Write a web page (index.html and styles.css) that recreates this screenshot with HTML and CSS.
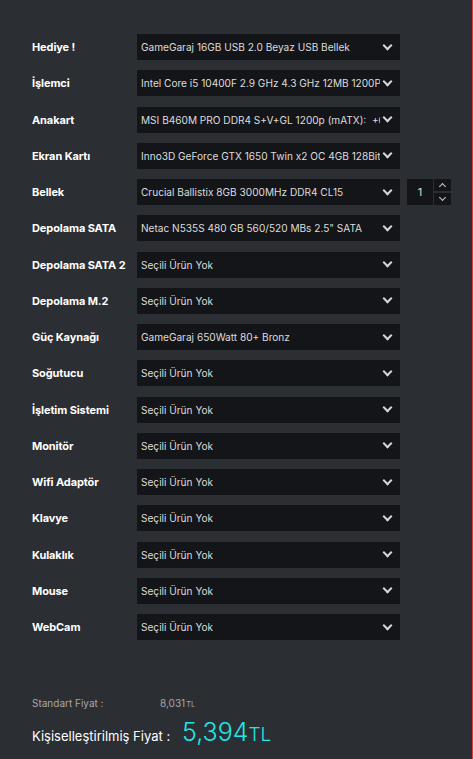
FILE: index.html
```html
<!DOCTYPE html>
<html lang="tr">
<head>
<meta charset="utf-8">
<link rel="stylesheet" href="styles.css">
</head>
<body>
<div class="page">
  <div class="rows">
    <div class="row"><div class="label">Hediye !</div><div class="select"><span class="val">GameGaraj 16GB USB 2.0 Beyaz USB Bellek</span><span class="chev"></span></div></div>
    <div class="row"><div class="label">İşlemci</div><div class="select"><span class="val">Intel Core i5 10400F 2.9 GHz 4.3 GHz 12MB 1200P: +0</span><span class="chev"></span></div></div>
    <div class="row"><div class="label">Anakart</div><div class="select"><span class="val">MSI B460M PRO DDR4 S+V+GL 1200p (mATX):  +69</span><span class="chev"></span></div></div>
    <div class="row"><div class="label">Ekran Kartı</div><div class="select"><span class="val">Inno3D GeForce GTX 1650 Twin x2 OC 4GB 128Bit: +0</span><span class="chev"></span></div></div>
    <div class="row"><div class="label">Bellek</div><div class="select"><span class="val">Crucial Ballistix 8GB 3000MHz DDR4 CL15</span><span class="chev"></span></div>
      <div class="qty">1</div>
      <div class="spin"><span class="sbtn up"></span><span class="sbtn down"></span></div>
    </div>
    <div class="row"><div class="label">Depolama SATA</div><div class="select"><span class="val">Netac N535S 480 GB 560/520 MBs 2.5" SATA</span><span class="chev"></span></div></div>
    <div class="row"><div class="label">Depolama SATA 2</div><div class="select"><span class="val">Seçili Ürün Yok</span><span class="chev"></span></div></div>
    <div class="row"><div class="label">Depolama M.2</div><div class="select"><span class="val">Seçili Ürün Yok</span><span class="chev"></span></div></div>
    <div class="row"><div class="label">Güç Kaynağı</div><div class="select"><span class="val">GameGaraj 650Watt 80+ Bronz</span><span class="chev"></span></div></div>
    <div class="row"><div class="label">Soğutucu</div><div class="select"><span class="val">Seçili Ürün Yok</span><span class="chev"></span></div></div>
    <div class="row"><div class="label">İşletim Sistemi</div><div class="select"><span class="val">Seçili Ürün Yok</span><span class="chev"></span></div></div>
    <div class="row"><div class="label">Monitör</div><div class="select"><span class="val">Seçili Ürün Yok</span><span class="chev"></span></div></div>
    <div class="row"><div class="label">Wifi Adaptör</div><div class="select"><span class="val">Seçili Ürün Yok</span><span class="chev"></span></div></div>
    <div class="row"><div class="label">Klavye</div><div class="select"><span class="val">Seçili Ürün Yok</span><span class="chev"></span></div></div>
    <div class="row"><div class="label">Kulaklık</div><div class="select"><span class="val">Seçili Ürün Yok</span><span class="chev"></span></div></div>
    <div class="row"><div class="label">Mouse</div><div class="select"><span class="val">Seçili Ürün Yok</span><span class="chev"></span></div></div>
    <div class="row"><div class="label">WebCam</div><div class="select"><span class="val">Seçili Ürün Yok</span><span class="chev"></span></div></div>
  </div>
  <div class="prices">
    <div class="std"><span class="std-label">Standart Fiyat :</span><span class="std-val">8,031<small>TL</small></span></div>
    <div class="custom"><span class="custom-label">Kişiselleştirilmiş Fiyat :</span><span class="custom-val">5,394<small>TL</small></span></div>
  </div>
</div>
</body>
</html>
```

FILE: styles.css
```css
* { box-sizing: border-box; }
html, body { margin: 0; padding: 0; }
body {
  background: #2b2e33;
  font-family: Inter, "Noto Sans", sans-serif;
  color: #fff;
  width: 473px;
  height: 759px;
  overflow: hidden;
}
.page {
  height: 759px;
  border-right: 1px solid #e53935;
  padding: 34px 0 0 32px;
}
.rows {
  display: flex;
  flex-direction: column;
  gap: 10.25px;
}
.row {
  display: flex;
  align-items: center;
  height: 26px;
}
.label {
  width: 105px;
  font-size: 11px;
  font-weight: 700;
  color: #fff;
  letter-spacing: -0.1px;
}
.select {
  width: 263px;
  height: 26px;
  background: #141518;
  display: flex;
  align-items: center;
  padding: 0 9px 0 4px;
  font-size: 10.1px;
  color: #dcdcdc;
}
.val {
  flex: 1;
  white-space: pre;
  overflow: hidden;
}
.chev {
  width: 7px;
  height: 7px;
  border-right: 2px solid #d6d6d6;
  border-bottom: 2px solid #d6d6d6;
  transform: rotate(45deg);
  margin: -4px 0 0 4px;
  flex: none;
}
.qty {
  margin-left: 7px;
  width: 26px;
  height: 26px;
  background: #141518;
  color: #ddd;
  font-size: 11px;
  display: flex;
  align-items: center;
  justify-content: center;
}
.spin {
  margin-left: 1px;
  display: flex;
  flex-direction: column;
  gap: 2px;
}
.sbtn {
  width: 17px;
  height: 12px;
  background: #141518;
  display: flex;
  align-items: center;
  justify-content: center;
}
.sbtn::after {
  content: "";
  width: 4px;
  height: 4px;
  border-left: 1.5px solid #ccc;
  border-top: 1.5px solid #ccc;
}
.up::after { transform: rotate(45deg); margin-top: 3px; }
.down::after { transform: rotate(225deg); margin-top: -3px; }
.prices {
  margin-top: 57px;
}
.std {
  display: flex;
  align-items: baseline;
  font-size: 10px;
  color: #a8a8a8;
}
.std-label { width: 128px; }
.std-val small { font-size: 7.5px; margin-left: 1px; }
.custom {
  display: flex;
  align-items: baseline;
  margin-top: 8px;
}
.custom-label {
  width: 150px;
  font-size: 13px;
  color: #fff;
}
.custom-val {
  font-size: 25px;
  color: #1ee8e6;
  font-weight: 300;
}
.custom-val small { font-size: 19px; }
```
